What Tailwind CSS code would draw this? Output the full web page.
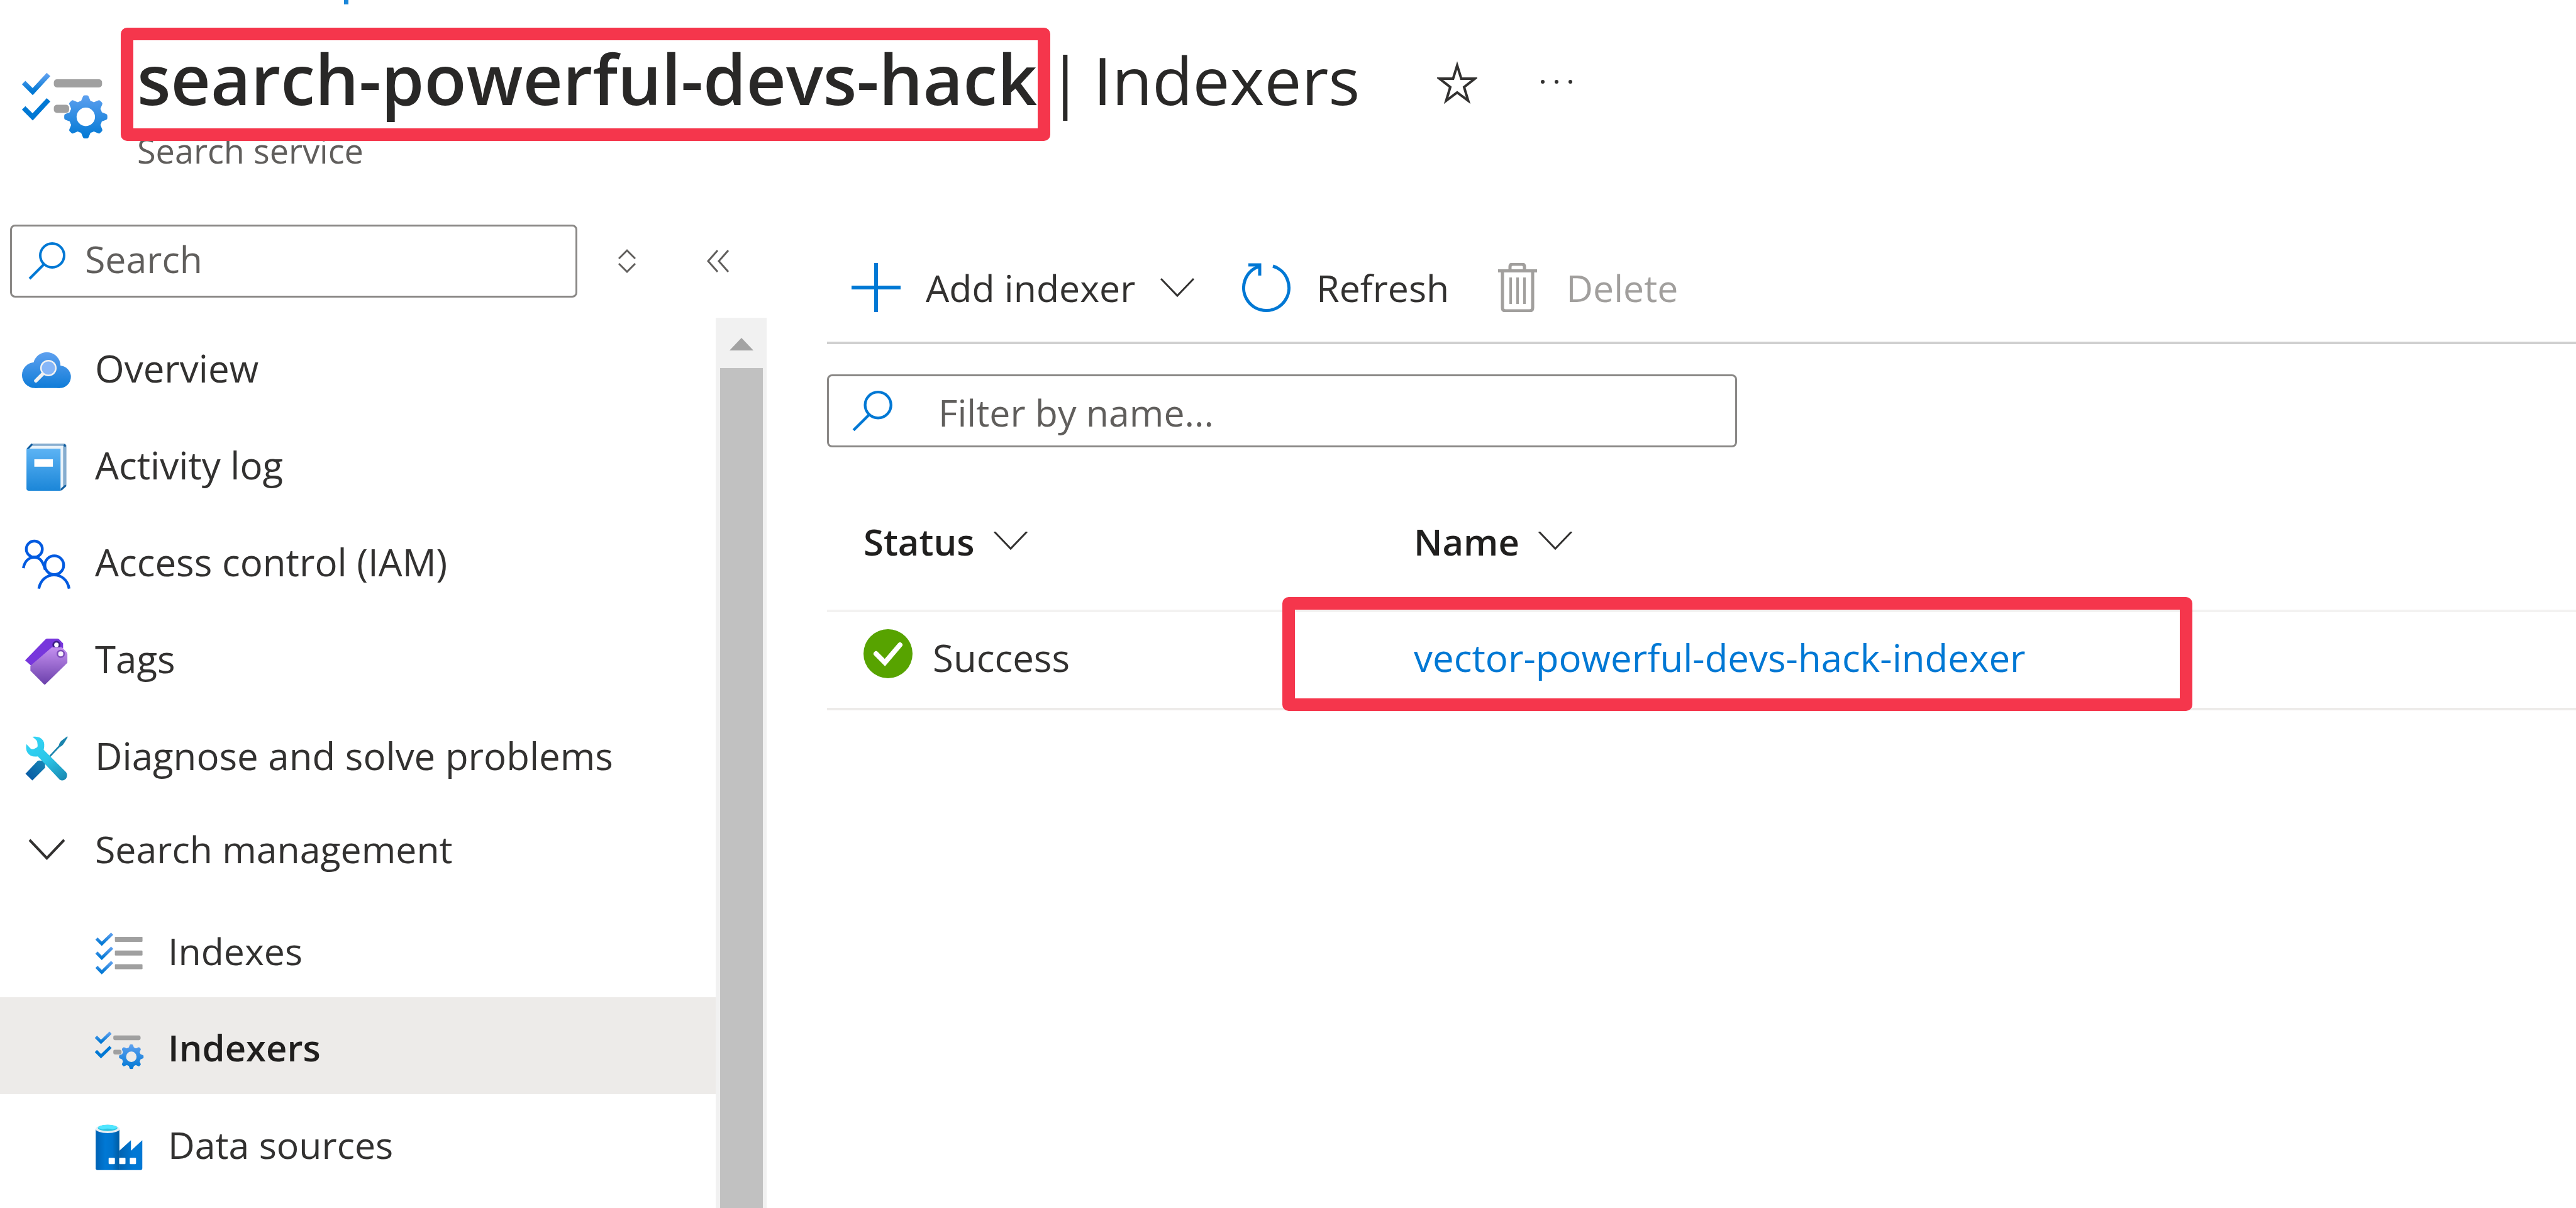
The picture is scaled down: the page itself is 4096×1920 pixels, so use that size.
<!DOCTYPE html>
<html lang="en">
<head>
<meta charset="utf-8">
<title>search-powerful-devs-hack | Indexers</title>
<script src="https://cdn.jsdelivr.net/npm/@tailwindcss/browser@4"></script>
</head>
<body class="bg-white font-['Open_Sans',sans-serif] text-[#323130]">

<!-- Shared gradients and the gear shape -->
<svg class="absolute size-0" aria-hidden="true">
  <defs>
    <linearGradient id="blue" x1="0" y1="0" x2="0" y2="1"><stop offset="0" stop-color="#5ea0ef"/><stop offset="1" stop-color="#0078d4"/></linearGradient>
    <g id="gear-shape">
      <circle r="66" fill="none" stroke="#fff" stroke-width="38"/>
      <g id="teeth4" fill="#fff">
        <path d="M-26-76 L-15-103 Q-13-110-6-110 H6 Q13-110 15-103 L26-76Z"/>
        <path transform="rotate(90)" d="M-26-76 L-15-103 Q-13-110-6-110 H6 Q13-110 15-103 L26-76Z"/>
        <path transform="rotate(180)" d="M-26-76 L-15-103 Q-13-110-6-110 H6 Q13-110 15-103 L26-76Z"/>
        <path transform="rotate(270)" d="M-26-76 L-15-103 Q-13-110-6-110 H6 Q13-110 15-103 L26-76Z"/>
      </g>
      <use href="#teeth4" transform="rotate(45)"/>
    </g>
    <mask id="gear-mask" maskUnits="userSpaceOnUse" x="-115" y="-115" width="230" height="230"><use href="#gear-shape"/></mask>
    <g id="gear"><rect x="-112" y="-112" width="224" height="224" fill="url(#blue)" mask="url(#gear-mask)"/></g>
  </defs>
</svg>

<div class="flex min-h-screen flex-col overflow-hidden">

  <header class="h-[325px] shrink-0">
    <div class="ml-[547px] h-[7px] w-[7px] bg-[#1a86d9]"></div>
    <div class="flex pt-[37px] pl-8">
      <svg class="mt-[66px] h-[116px] w-36 shrink-0" viewBox="103 113 462 372" aria-hidden="true">
        <path d="M121 181 L167 227 L248 140" fill="none" stroke="url(#blue)" stroke-width="25"/>
        <path d="M121 310 L167 356 L248 269" fill="none" stroke="#0078d4" stroke-width="25"/>
        <rect x="275" y="164" width="246" height="42" rx="16" fill="#a0a0a0"/>
        <rect x="275" y="294" width="78" height="42" rx="16" fill="#a0a0a0"/>
        <use href="#gear" transform="translate(438 356)"/>
      </svg>
      <div class="ml-[42px]">
        <div class="flex items-center">
          <h1 class="flex items-baseline gap-4 text-[105px] leading-[160px] text-[#292827]">
            <span class="relative text-[110px] font-semibold">search-powerful-devs-hack<span class="absolute top-0 -left-[26px] h-[180px] w-[1478px] rounded-[10px] border-20 border-[#f5364c]"></span></span>
            <span>|</span>
            <span>Indexers</span>
          </h1>
          <button class="ml-[123px]" aria-label="Add to favorites">
            <svg class="mt-3 h-[70px] w-16" viewBox="0 0 64 70" fill="none" stroke="#323130" stroke-width="4" aria-hidden="true"><path d="M32 7 L38.500 28 H60 L43 41.500 L49.500 63 L32 50 L14.500 63 L21 41.500 L4 28 H25.500Z"/></svg>
          </button>
          <button class="ml-[100px]" aria-label="More actions">
            <svg class="mt-2 h-2 w-13" viewBox="0 0 52 8" fill="#323130" aria-hidden="true"><circle cx="4" cy="4" r="3"/><circle cx="26" cy="4" r="3"/><circle cx="48" cy="4" r="3"/></svg>
          </button>
        </div>
        <p class="text-[54px] leading-[64px] text-[#605e5c]">Search service</p>
      </div>
    </div>
  </header>

  <div class="flex flex-1">

    <aside class="flex w-[1219px] shrink-0 flex-col pt-8">
      <div class="flex items-center pl-4">
        <label class="flex h-[116px] w-[902px] items-center rounded-[8px] border-3 border-[#8a8886] pl-[26px]">
          <svg class="size-[60px] shrink-0" viewBox="0 0 60 60" fill="none" stroke="#0078d4" stroke-width="4" aria-hidden="true"><circle cx="38" cy="21" r="19"/><path d="M25 35 L2 58"/></svg>
          <input type="text" aria-label="Search" placeholder="Search" class="ml-[30px] min-w-0 flex-1 pb-2 text-[59px] leading-[80px] outline-none placeholder:text-[#605e5c]">
        </label>
        <button class="ml-[65px]" aria-label="Expand or collapse groups">
          <svg class="h-10 w-7" viewBox="0 0 28 40" fill="none" stroke="#605e5c" stroke-width="3" aria-hidden="true"><path d="M1 16 L14 3 L27 16 M1 24 L14 37 L27 24"/></svg>
        </button>
        <button class="ml-[113px]" aria-label="Collapse menu">
          <svg class="h-9 w-9" viewBox="0 0 36 36" fill="none" stroke="#605e5c" stroke-width="3" aria-hidden="true"><path d="M17 1 L2 18 L17 35 M34 1 L19 18 L34 35"/></svg>
        </button>
      </div>

      <div class="mt-8 flex flex-1">
        <nav class="flex-1 text-[60px] leading-[80px]" aria-label="Service menu">
          <a href="#" class="flex h-[154px] items-center gap-[37px] pt-1.5 pl-[34px]">
            <svg class="h-22 w-20 shrink-0" viewBox="49 -5 257 282" aria-hidden="true">
              <defs><linearGradient id="cloud" gradientUnits="userSpaceOnUse" x1="0" y1="55" x2="0" y2="238"><stop offset="0" stop-color="#5ea0ef"/><stop offset="1" stop-color="#0f7cd8"/></linearGradient></defs>
              <g fill="url(#cloud)"><circle cx="118" cy="172" r="66"/><circle cx="179" cy="125" r="70"/><circle cx="245" cy="181" r="57"/><rect x="118" y="150" width="127" height="88"/></g>
              <path d="M160 164 L123 201" stroke="#f2f2f2" stroke-width="18" stroke-linecap="round"/>
              <circle cx="187" cy="136" r="38" fill="#86b6f8" stroke="#f2f2f2" stroke-width="8"/>
            </svg>
            Overview</a>
          <a href="#" class="flex h-[154px] items-center gap-[37px] pt-1.5 pl-[34px]">
            <svg class="h-22 w-20 shrink-0" viewBox="49 490 257 282" aria-hidden="true">
              <defs><linearGradient id="book" x1="0" y1="0" x2="0" y2="1"><stop offset="0" stop-color="#5cb3f4"/><stop offset="1" stop-color="#1b86d8"/></linearGradient></defs>
              <path d="M76 548 L102 522 H266 Q279 522 279 535 V738 L252 763 H90Z" fill="#86adcf"/>
              <path d="M80 550 L104 524 M266 527 L275 537 M276 735 L252 758" stroke="#0f5c9e" stroke-width="9"/>
              <path d="M88 550 L104 534 H262 V740 L248 752 V550Z" fill="#eaf3fa"/>
              <path d="M75 548 H249 V763 H87 Q75 763 75 751Z" fill="url(#book)"/>
              <rect x="115" y="602" width="95" height="38" fill="#fff"/>
            </svg>
            Activity log</a>
          <a href="#" class="flex h-[154px] items-center gap-[37px] pt-1.5 pl-[34px]">
            <svg class="h-22 w-20 shrink-0" viewBox="49 984 257 282" fill="none" stroke="#015ae0" stroke-width="14" aria-hidden="true">
              <circle cx="115" cy="1060" r="41"/>
              <circle cx="217" cy="1142" r="48"/>
              <path d="M59 1157 C66 1121 88 1102 115 1102 S158 1118 171 1166"/>
              <path d="M138 1262 C146 1216 180 1192 216 1192 S285 1216 293 1262"/>
            </svg>
            Access control (IAM)</a>
          <a href="#" class="flex h-[154px] items-center gap-[37px] pt-1.5 pl-[34px]">
            <svg class="h-22 w-20 shrink-0" viewBox="49 38 257 282" aria-hidden="true">
              <defs><linearGradient id="tag" x1="0" y1="0" x2="0" y2="1"><stop offset="0" stop-color="#c490f0"/><stop offset="1" stop-color="#6b40ab"/></linearGradient></defs>
              <path d="M68 187 L172 80 Q176 76 182 76 H232 Q238 76 242 80 L262 100 V125 L200 140 L103 218Z" fill="#7736dc"/>
              <circle cx="228" cy="108" r="16" fill="#fff" stroke="#3d1f85" stroke-width="9"/>
              <path d="M95 215 L205 120 H250 Q256 120 260 124 L280 145 Q284 149 284 155 V200 L172 309 Q168 313 164 309 L95 240Z" fill="url(#tag)"/>
              <circle cx="250" cy="154" r="17" fill="#f7f2fc" stroke="#7b4bb8" stroke-width="8"/>
            </svg>
            Tags</a>
          <a href="#" class="flex h-[154px] items-center gap-[37px] pt-1.5 pl-[34px]">
            <svg class="h-22 w-20 shrink-0" viewBox="49 532 257 282" aria-hidden="true">
              <defs>
                <linearGradient id="handle" x1="1" y1="0" x2="0" y2="1"><stop offset="0" stop-color="#1787b6"/><stop offset="1" stop-color="#0655a3"/></linearGradient>
                <linearGradient id="wrench" gradientUnits="userSpaceOnUse" x1="110" y1="577" x2="260" y2="800"><stop offset="0" stop-color="#32d4f5"/><stop offset=".5" stop-color="#2cc6e8"/><stop offset="1" stop-color="#198ab3"/></linearGradient>
              </defs>
              <path d="M185 680 L240 622 Q242 604 262 590 L284 574 L285 580 L270 605 Q258 626 246 628 L193 684Z" fill="#1b84ad"/>
              <path d="M70 765 L130 702 Q134 698 140 698 L170 700 V735 L105 800Z" fill="url(#handle)"/>
              <path d="M105 577 Q142 571 160 596 Q170 612 163 643 L277 757 Q288 772 277 790 Q262 806 245 796 L133 677 Q96 683 79 656 Q69 636 75 614 L96 637 Q104 642 112 639 L127 632 Q133 628 132 620 L130 603 Q128 594 105 577Z" fill="url(#wrench)"/>
            </svg>
            Diagnose and solve problems</a>

          <button class="flex h-[156px] w-full items-center gap-[37px] pb-2 pl-[34px] text-left text-[59px]" aria-expanded="true">
            <svg class="h-10 w-20 shrink-0" viewBox="0 0 80 40" fill="none" stroke="#323130" stroke-width="4" aria-hidden="true"><path d="M13 6 L40.500 35 L68 6"/></svg>
            Search management</button>

          <a href="#" class="flex h-[154px] items-center gap-[37px] pt-1.5 pl-[150px] text-[59px]">
            <svg class="h-22 w-20 shrink-0" viewBox="61 -4 257 282" aria-hidden="true">
              <g fill="none" stroke="url(#blue)" stroke-width="16">
                <path d="M72 75 L99 102 L152 50"/><path d="M72 147 L99 174 L152 122"/><path d="M72 220 L99 247 L152 195"/>
              </g>
              <g fill="#a0a0a0"><rect x="166" y="66" width="141" height="26" rx="4"/><rect x="166" y="136" width="141" height="26" rx="4"/><rect x="166" y="206" width="141" height="26" rx="4"/></g>
            </svg>
            Indexes</a>
          <a href="#" aria-current="page" class="flex h-[154px] items-center gap-[37px] bg-[#edebe9] pt-1.5 pl-[150px] text-[58px] font-semibold text-[#201f1e]">
            <svg class="h-22 w-20 shrink-0" viewBox="61 490 257 282" aria-hidden="true">
              <path d="M69 576 L95 602 L144 555" fill="none" stroke="url(#blue)" stroke-width="16"/>
              <path d="M69 649 L95 675 L144 628" fill="none" stroke="#0078d4" stroke-width="16"/>
              <rect x="158" y="569" width="139" height="24" rx="8" fill="#a0a0a0"/>
              <rect x="158" y="642" width="42" height="24" rx="8" fill="#a0a0a0"/>
              <use href="#gear" transform="translate(250 678) scale(.57)"/>
            </svg>
            Indexers</a>
          <a href="#" class="flex h-[154px] items-center gap-[37px] pt-1.5 pl-[150px] text-[59px]">
            <svg class="h-22 w-20 shrink-0" viewBox="61 984 257 282" aria-hidden="true">
              <defs>
                <linearGradient id="stack"><stop offset="0" stop-color="#0062b4"/><stop offset=".4" stop-color="#0078d4"/><stop offset=".7" stop-color="#0074ce"/><stop offset="1" stop-color="#005ba1"/></linearGradient>
                <linearGradient id="plant"><stop offset="0" stop-color="#0062b0"/><stop offset=".6" stop-color="#0078d4"/></linearGradient>
              </defs>
              <path d="M68 1046 H189 V1256 H76 Q68 1256 68 1248Z" fill="url(#stack)"/>
              <path d="M188 1158 L248 1103 V1157 L306 1103 V1248 Q306 1256 298 1256 H188Z" fill="url(#plant)"/>
              <ellipse cx="129" cy="1046" rx="61" ry="21" fill="#e8eef4"/>
              <ellipse cx="129" cy="1041" rx="50" ry="16" fill="#32c5e0"/>
              <path d="M79 1041 A50 16 0 0 1 179 1041 L155 1048 Q129 1040 103 1048Z" fill="#50e6ff"/>
              <g fill="#fff"><rect x="134" y="1193" width="32" height="32" rx="4"/><rect x="188" y="1193" width="32" height="32" rx="4"/><rect x="242" y="1193" width="32" height="32" rx="4"/></g>
            </svg>
            Data sources</a>
        </nav>

        <div class="flex w-[81px] flex-col items-center bg-[#f1f1f1]">
          <button class="flex h-20 w-full items-center justify-center" aria-label="Scroll up">
            <svg class="mt-1 h-5 w-[38px]" viewBox="0 0 38 20" fill="#a3a3a3" aria-hidden="true"><path d="M19 0 L38 20 H0Z"/></svg>
          </button>
          <div class="w-[68px] flex-1 bg-[#c1c1c1]"></div>
        </div>
      </div>
    </aside>

    <main class="ml-24 min-w-0 flex-1 pt-[46px]">
      <div class="flex h-44 items-center gap-[76px] border-b-4 border-[#d0d0d0] pl-[39px] text-[59px] leading-[80px]">
        <button class="flex items-center gap-10">
          <svg class="size-[78px]" viewBox="0 0 78 78" stroke="#0078d4" stroke-width="6" aria-hidden="true"><path d="M39 0 V78 M0 39 H78"/></svg>
          Add indexer
          <svg class="h-8 w-[54px]" viewBox="0 0 54 32" fill="none" stroke="#323130" stroke-width="3" aria-hidden="true"><path d="M1 2 L27 29 L53 2"/></svg>
        </button>
        <button class="flex items-center gap-10">
          <svg class="size-[78px]" viewBox="0 0 78 78" fill="none" stroke="#0078d4" stroke-width="5" aria-hidden="true"><path d="M49 5 A36 36 0 1 1 28 5"/><path d="M10 3 H28 V20"/></svg>
          Refresh
        </button>
        <button class="flex items-center gap-11 text-[#a19f9d]" disabled>
          <svg class="h-[78px] w-[66px]" viewBox="-2 0 66 78" fill="none" stroke="#a19f9d" stroke-width="5" aria-hidden="true"><path d="M0 12.500 H62"/><path d="M19 12 V6 Q19 2 23 2 H38 Q42 2 42 6 V12 M7 13 V71 Q7 76 12 76 H50 Q55 76 55 71 V13"/><path d="M20 23 V65 M31 23 V65 M42 23 V65" stroke-width="4"/></svg>
          Delete
        </button>
      </div>

      <label class="mt-12 flex h-[116px] w-[1447px] items-center rounded-[8px] border-3 border-[#8a8886] pl-[37px]">
        <svg class="size-[65px] shrink-0" viewBox="0 0 60 60" fill="none" stroke="#0078d4" stroke-width="4" aria-hidden="true"><circle cx="38" cy="21" r="19"/><path d="M25 35 L2 58"/></svg>
        <input type="text" aria-label="Filter by name" placeholder="Filter by name..." class="ml-[72px] min-w-0 flex-1 pt-1 text-[59px] leading-[80px] outline-none placeholder:text-[#605e5c]">
      </label>

      <table class="mt-[42px] w-full table-fixed text-left text-[60px] leading-[80px]">
        <thead>
          <tr class="h-[218px] border-b-4 border-[#f3f2f1] text-[58px] text-[#201f1e]">
            <th scope="col" class="w-[933px] pl-[58px] font-semibold">
              <button class="flex items-center gap-[30px]">Status
                <svg class="h-8 w-[54px]" viewBox="0 0 54 32" fill="none" stroke="#323130" stroke-width="3" aria-hidden="true"><path d="M1 0 L27 27 L53 0"/></svg>
              </button>
            </th>
            <th scope="col" class="font-semibold">
              <button class="flex items-center gap-[30px]">Name
                <svg class="h-8 w-[54px]" viewBox="0 0 54 32" fill="none" stroke="#323130" stroke-width="3" aria-hidden="true"><path d="M1 0 L27 27 L53 0"/></svg>
              </button>
            </th>
          </tr>
        </thead>
        <tbody>
          <tr class="h-[156px] border-b-4 border-[#edebe9]">
            <td class="pb-2 pl-[58px]">
              <div class="flex items-center gap-8">
                <svg class="h-[90px] w-[78px]" viewBox="0 0 78 90" aria-hidden="true"><circle cx="39" cy="39" r="39" fill="#57a300"/><path d="M20 39 L34 53 L58 25" fill="none" stroke="#fff" stroke-width="8" stroke-linecap="round"/></svg>
                Success
              </div>
            </td>
            <td class="relative pb-2">
              <a href="#" class="text-[#0078d4]">vector-powerful-devs-hack-indexer</a>
              <span class="absolute -top-6 -left-[209px] h-[181px] w-[1447px] rounded-[10px] border-20 border-[#f5364c]"></span>
            </td>
          </tr>
        </tbody>
      </table>
    </main>
  </div>
</div>
</body>
</html>
